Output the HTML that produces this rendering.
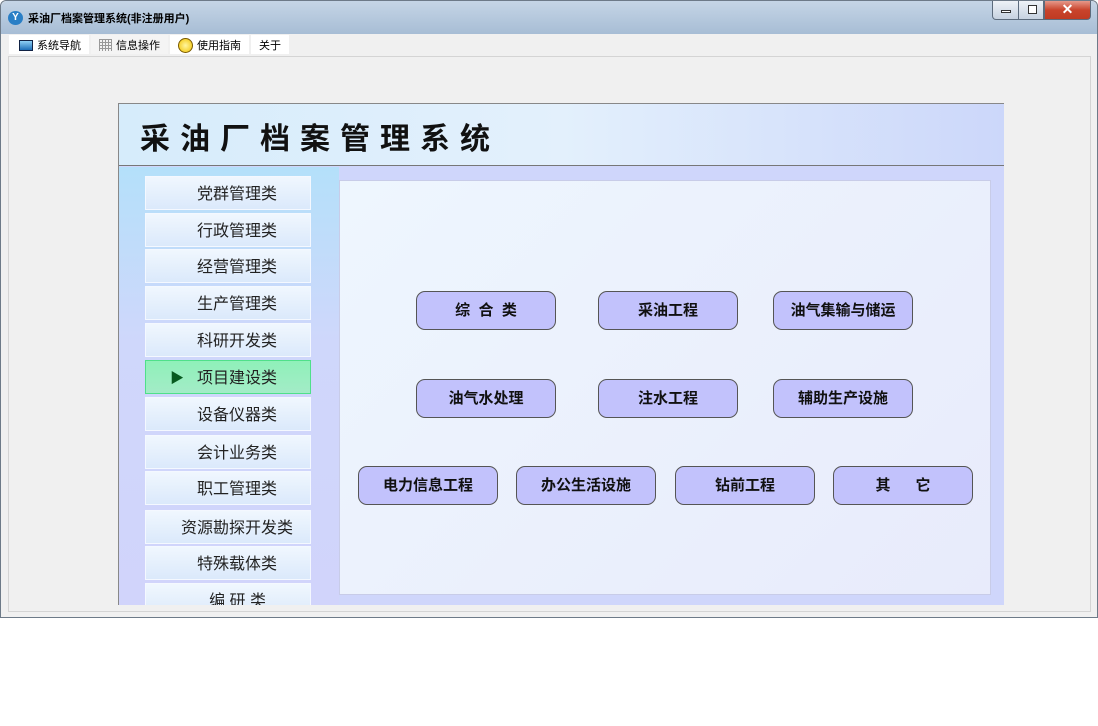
<!DOCTYPE html>
<html><head><meta charset="utf-8"><style>
*{margin:0;padding:0;box-sizing:border-box}
body{width:1098px;height:726px;background:#fff;position:relative;overflow:hidden;font-family:"Liberation Sans","Noto Sans CJK SC",sans-serif}
.win{position:absolute;left:0;top:0;width:1098px;height:618px;background:#f0f0f0;border:1px solid #6d7a88;border-radius:6px 6px 0 0}
.title{position:absolute;left:0;top:0;width:1096px;height:33px;background:linear-gradient(#c5d5e6,#a7bdd5);border-radius:6px 6px 0 0}
.title span{position:absolute;left:27px;top:9px;font-size:11px;font-weight:bold;color:#000}
.logo{position:absolute;left:7px;top:10px;width:15px;height:14px;border-radius:50%;background:#2a7fc6;color:#fff;font-size:10px;font-weight:bold;text-align:center;line-height:14px}
.ctl{position:absolute;top:0;height:19px;border:1px solid #5c6b7c;border-top:none}
.menu{position:absolute;left:8px;top:34px;height:19px;display:flex;gap:2px}
.menu div{background:#fff;font-size:11px;padding:1px 8px 0 8px;height:19px;display:flex;align-items:center;gap:4px}
.inner{position:absolute;left:7px;top:55px;width:1083px;height:556px;border:1px solid #d4d4d4}
.panel{position:absolute;left:118px;top:103px;width:886px;height:502px;background:#cfd6fb;border-left:1px solid #888;overflow:hidden}
.head{position:absolute;left:0;top:0;width:885px;height:63px;background:linear-gradient(90deg,#d6ecfb,#e3f0fc 50%,#ccd7fa);border-top:1px solid #888;border-bottom:1px solid #777}
.head span{position:absolute;left:21px;top:10px;font-size:30px;font-weight:bold;letter-spacing:10px;color:#111}
.side{position:absolute;left:0;top:64px;width:220px;height:438px;background:linear-gradient(#b4e0fa,#cfd7fb 40%,#d1d4fb);overflow:hidden}
.it{position:absolute;left:26px;width:166px;height:34px;background:linear-gradient(#f0f7fe,#dbe9fb);border:1px solid #f4f8ff;font-size:16px;color:#222;text-align:right;padding-right:33px;line-height:35px}
.it.sel{background:linear-gradient(#8ff0b9,#a3ecc7);border:1px solid #4fe08a}
.content{position:absolute;left:220px;top:77px;width:652px;height:415px;background:linear-gradient(135deg,#eef6fe,#e8ebfb);border:1px solid #c8cce8}
.b{position:absolute;width:140px;height:39px;background:#c2c2fc;border:1px solid #555;border-radius:9px;font-size:15px;font-weight:bold;text-align:center;line-height:37px;color:#111}
</style></head><body>
<div class="win">
<div class="title"><div class="logo">Y</div><span>采油厂档案管理系统(非注册用户)</span>
<div class="ctl" style="left:991px;width:27px;background:linear-gradient(#eef2f7,#c6d2e0);border-radius:0 0 0 4px"><div style="position:absolute;left:8px;top:9px;width:10px;height:3px;border:1px solid #333;background:#fff"></div></div>
<div class="ctl" style="left:1017px;width:26px;background:linear-gradient(#eef2f7,#c6d2e0)"><div style="position:absolute;left:9px;top:4px;width:9px;height:9px;border:1px solid #333;background:#fff"></div></div>
<div class="ctl" style="left:1043px;width:47px;background:linear-gradient(#e6998a,#c9442c 50%,#c03a22);border-radius:0 0 4px 0;color:#fff;text-align:center;font-weight:bold;font-size:14px;line-height:17px">✕</div>
</div>
<div class="menu">
<div style="padding-left:10px"><span style="display:inline-block;width:14px;height:11px;border:1px solid #124;background:linear-gradient(#8fd0f5,#1e6fb8)"></span>系统导航</div>
<div style="background:#f4f4f4"><span style="display:inline-block;width:13px;height:12px;background:repeating-linear-gradient(90deg,#999 0 1px,transparent 1px 3px),repeating-linear-gradient(#999 0 1px,transparent 1px 3px)"></span>信息操作</div>
<div><span style="display:inline-block;width:15px;height:15px;border-radius:50%;background:radial-gradient(#fff6a0,#f2c200);border:1px solid #7a5a00"></span>使用指南</div>
<div>关于</div>
</div>
<div class="inner"></div>
</div>
<div class="panel">
<div class="head"><span>采油厂档案管理系统</span></div>
<div class="side">
<div class="it" style="top:9px">党群管理类</div>
<div class="it" style="top:46px">行政管理类</div>
<div class="it" style="top:82px">经营管理类</div>
<div class="it" style="top:119px">生产管理类</div>
<div class="it" style="top:156px">科研开发类</div>
<div class="it sel" style="top:193px"><span style="position:absolute;left:24px;top:0;color:#085a20;font-size:14px">▶</span>项目建设类</div>
<div class="it" style="top:230px">设备仪器类</div>
<div class="it" style="top:268px">会计业务类</div>
<div class="it" style="top:304px">职工管理类</div>
<div class="it" style="top:343px;padding-right:17px">资源勘探开发类</div>
<div class="it" style="top:379px">特殊载体类</div>
<div class="it" style="top:416px;padding-right:44px">编 研 类</div>
</div>
<div class="content">
<div class="b" style="left:76px;top:110px">综&nbsp; 合&nbsp; 类</div>
<div class="b" style="left:258px;top:110px">采油工程</div>
<div class="b" style="left:433px;top:110px">油气集输与储运</div>
<div class="b" style="left:76px;top:198px">油气水处理</div>
<div class="b" style="left:258px;top:198px">注水工程</div>
<div class="b" style="left:433px;top:198px">辅助生产设施</div>
<div class="b" style="left:18px;top:285px">电力信息工程</div>
<div class="b" style="left:176px;top:285px">办公生活设施</div>
<div class="b" style="left:335px;top:285px">钻前工程</div>
<div class="b" style="left:493px;top:285px">其&nbsp;&nbsp;&nbsp;&nbsp;&nbsp; 它</div>
</div>
</div>
</body></html>
